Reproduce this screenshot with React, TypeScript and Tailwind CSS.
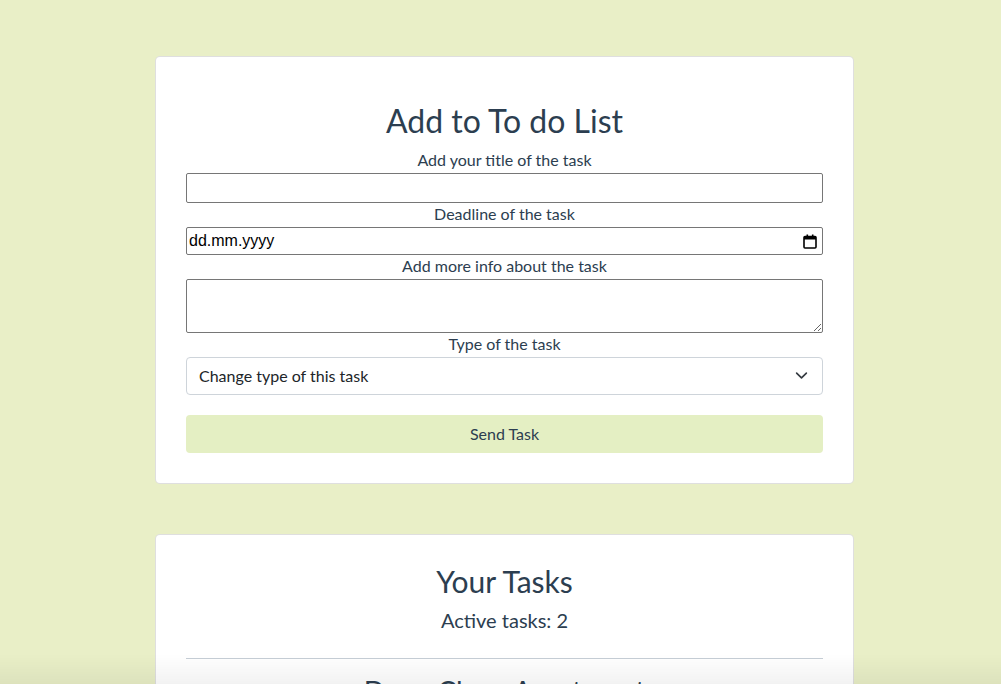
import { useState } from "react";

const taskTypes = ["Change type of this task", "Home", "Work", "Shopping", "Other"];

function Label({ children, className = "" }: { children: React.ReactNode; className?: string }) {
  return <label className={`block text-center text-[16px] leading-6 text-[#2c3e50] ${className}`}>{children}</label>;
}

function AddTaskForm() {
  const [title, setTitle] = useState("");
  const [info, setInfo] = useState("");
  const [type, setType] = useState(taskTypes[0]);

  return (
    <div className="rounded-[5px] border border-black/[0.125] bg-white px-[30px] pt-[45px] pb-[30px]">
      <h1 className="mb-[8px] text-center text-[32px] leading-[38px] font-normal text-[#2c3e50]">Add to To do List</h1>
      <Label>Add your title of the task</Label>
      <input
        value={title}
        onChange={(e) => setTitle(e.target.value)}
        className="mt-px block h-[30px] w-full rounded-[2px] border border-[#767676] px-[2px] text-[16px]"
      />
      <Label className="-mt-px mb-px">Deadline of the task</Label>
      <div className="flex h-[28px] w-full items-center justify-between rounded-[2px] border border-[#767676] pl-[2px] pr-[5px]">
        <span className="font-['Liberation_Sans',sans-serif] text-[16px] text-black">dd.mm.yyyy</span>
        <svg width="14" height="15" viewBox="0 0 14 15" className="text-black">
          <rect x="1" y="2.5" width="12" height="11.5" rx="1" fill="none" stroke="currentColor" strokeWidth="1.6" />
          <rect x="1" y="2.5" width="12" height="3" fill="currentColor" />
          <rect x="3.5" y="0.5" width="1.6" height="3" fill="currentColor" />
          <rect x="8.9" y="0.5" width="1.6" height="3" fill="currentColor" />
        </svg>
      </div>
      <Label className="-mt-px mb-px">Add more info about the task</Label>
      <textarea
        value={info}
        onChange={(e) => setInfo(e.target.value)}
        className="block h-[54px] w-full rounded-[2px] border border-[#767676] px-[2px] text-[16px]"
      />
      <Label className="-mt-px mb-px">Type of the task</Label>
      <div className="relative">
        <select
          value={type}
          onChange={(e) => setType(e.target.value)}
          className="block h-[38px] w-full appearance-none rounded-[4px] border border-[#ced4da] bg-white pl-[12px] pr-9 text-[16px] text-[#212529]"
        >
          {taskTypes.map((t) => (
            <option key={t}>{t}</option>
          ))}
        </select>
        <svg
          width="13"
          height="13"
          viewBox="0 0 16 16"
          className="pointer-events-none absolute right-[15px] top-[12px] text-[#343a40]"
        >
          <path d="M2 5l6 6 6-6" fill="none" stroke="currentColor" strokeWidth="2" strokeLinecap="round" strokeLinejoin="round" />
        </svg>
      </div>
      <button className="mt-[20px] block h-[38px] w-full rounded-[4px] bg-[#e4efc3] text-[16px] text-[#2c3e50]">
        Send Task
      </button>
    </div>
  );
}

function TaskList() {
  const tasks = ["Deep Clean Apartment", "Buy groceries"];
  return (
    <div className="rounded-[5px] border border-black/[0.125] bg-white px-[30px] pt-[28px] pb-[30px]">
      <h2 className="text-center text-[30px] leading-9 text-[#2c3e50]">Your Tasks</h2>
      <p className="mt-[7px] text-center text-[20px] leading-7 text-[#2c3e50]">Active tasks: {tasks.length}</p>
      {tasks.map((t, i) => (
        <div key={t}>
          <hr className={`${i === 0 ? "mt-[24px]" : "mt-[20px]"} border-t border-[#c6ced6]`} />
          <h3 className="mt-[14px] text-center text-[28px] leading-9 text-[#2c3e50]">{t}</h3>
        </div>
      ))}
    </div>
  );
}

export default function App() {
  return (
    <div className="min-h-screen bg-[#e9efc7] pl-[8px] font-['Lato','Open_Sans',sans-serif]">
      <div className="mx-auto flex w-[699px] flex-col gap-[50px] pt-[56px] pb-10">
        <AddTaskForm />
        <TaskList />
      </div>
      <div className="pointer-events-none fixed inset-x-0 bottom-0 h-[30px] bg-gradient-to-b from-transparent to-black/[0.05]" />
    </div>
  );
}
